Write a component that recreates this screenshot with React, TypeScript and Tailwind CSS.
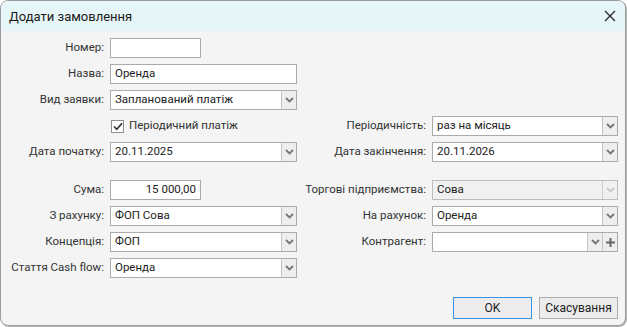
import { ReactNode } from "react";

function Chevron({ disabled }: { disabled?: boolean }) {
  return (
    <svg width="9" height="6" viewBox="0 0 9 6">
      <path
        d="M1 1 L4.5 4.5 L8 1"
        fill="none"
        stroke={disabled ? "#c8c8c8" : "#767676"}
        strokeWidth="1.8"
      />
    </svg>
  );
}

function Label({ children }: { children: ReactNode }) {
  return (
    <div className="flex items-center justify-end whitespace-nowrap text-[#333]">
      {children}
    </div>
  );
}

function Field({
  value,
  width,
  align,
}: {
  value?: string;
  width?: string;
  align?: "right";
}) {
  return (
    <div
      className={`flex h-[20px] items-center border border-[#ababab] bg-white px-[4px] text-[#222] ${width ?? "w-full"} ${align === "right" ? "justify-end" : ""}`}
    >
      {value}
    </div>
  );
}

function Combo({
  value,
  disabled,
  plus,
}: {
  value?: string;
  disabled?: boolean;
  plus?: boolean;
}) {
  return (
    <div
      className={`flex h-[20px] w-full border ${disabled ? "border-[#bdbdbd] bg-[#f0f0f0]" : "border-[#ababab] bg-white"}`}
    >
      <div className="flex flex-1 items-center px-[4px] text-[#222]">{value}</div>
      <div
        className={`flex w-[15px] items-center justify-center border-l ${disabled ? "border-[#d0d0d0] bg-[#f0f0f0]" : "border-[#c4c4c4] bg-[#eeeeee]"}`}
      >
        <Chevron disabled={disabled} />
      </div>
      {plus && (
        <div className="flex w-[15px] items-center justify-center border-l border-[#c4c4c4] bg-[#eeeeee]">
          <svg width="9" height="9" viewBox="0 0 9 9">
            <path d="M4.5 0 V9 M0 4.5 H9" stroke="#666" strokeWidth="2" />
          </svg>
        </div>
      )}
    </div>
  );
}

export default function App() {
  return (
    <div
      className="h-[327px] w-[627px] bg-white text-[11.5px] leading-none"
      style={{ fontFamily: 'Roboto, "Noto Sans", sans-serif' }}
    >
      <div className="flex h-[326px] w-[626px] flex-col overflow-hidden rounded-[8px] border border-[#9c9c9c] bg-[#f4f4f4] shadow-[1px_1px_0_#b5b5b5]">
        <div className="flex h-[30px] items-center justify-between bg-[#e6f5f7] pl-[8px] pr-[9px]">
          <span className="text-[13px] text-[#1a1a1a]">Додати замовлення</span>
          <svg width="12" height="12" viewBox="0 0 12 12">
            <path d="M1 1 L11 11 M11 1 L1 11" stroke="#222" strokeWidth="1.2" />
          </svg>
        </div>

        <div className="mt-[7px] grid grid-cols-[103px_187px_123px_186px] grid-rows-[20px_20px_20px_20px_20px_6px_20px_20px_20px_20px] gap-x-[6px] gap-y-[6px]">
          <Label>Номер:</Label>
          <Field width="w-[91px]" />
          <div />
          <div />

          <Label>Назва:</Label>
          <Field value="Оренда" />
          <div />
          <div />

          <Label>Вид заявки:</Label>
          <Combo value="Запланований платіж" />
          <div />
          <div />

          <div />
          <div className="flex items-center gap-[5px] pl-[1px]">
            <div className="flex h-[13px] w-[13px] items-center justify-center border border-[#8f8f8f] bg-white">
              <svg width="10" height="9" viewBox="0 0 10 9">
                <path d="M1 4.5 L3.8 7.3 L9 1.3" fill="none" stroke="#333" strokeWidth="1.7" />
              </svg>
            </div>
            <span className="text-[#333]">Періодичний платіж</span>
          </div>
          <Label>Періодичність:</Label>
          <Combo value="раз на місяць" />

          <Label>Дата початку:</Label>
          <Combo value="20.11.2025" />
          <Label>Дата закінчення:</Label>
          <Combo value="20.11.2026" />

          <div />
          <div />
          <div />
          <div />

          <Label>Сума:</Label>
          <Field value="15 000,00" width="w-[91px]" align="right" />
          <Label>Торгові підприємства:</Label>
          <Combo value="Сова" disabled />

          <Label>З рахунку:</Label>
          <Combo value="ФОП Сова" />
          <Label>На рахунок:</Label>
          <Combo value="Оренда" />

          <Label>Концепція:</Label>
          <Combo value="ФОП" />
          <Label>Контрагент:</Label>
          <Combo plus />

          <Label>Стаття Cash flow:</Label>
          <Combo value="Оренда" />
          <div />
          <div />
        </div>

        <div className="mt-[19px] flex justify-end gap-[7px] pr-[7px]">
          <button className="flex h-[22px] w-[79px] items-center justify-center border border-[#3a92e4] bg-[#ececec] text-[12px] text-[#222]">
            OK
          </button>
          <button className="flex h-[22px] w-[79px] items-center justify-center border border-[#adadad] bg-[#ececec] text-[12px] text-[#222]">
            Скасування
          </button>
        </div>
      </div>
    </div>
  );
}
